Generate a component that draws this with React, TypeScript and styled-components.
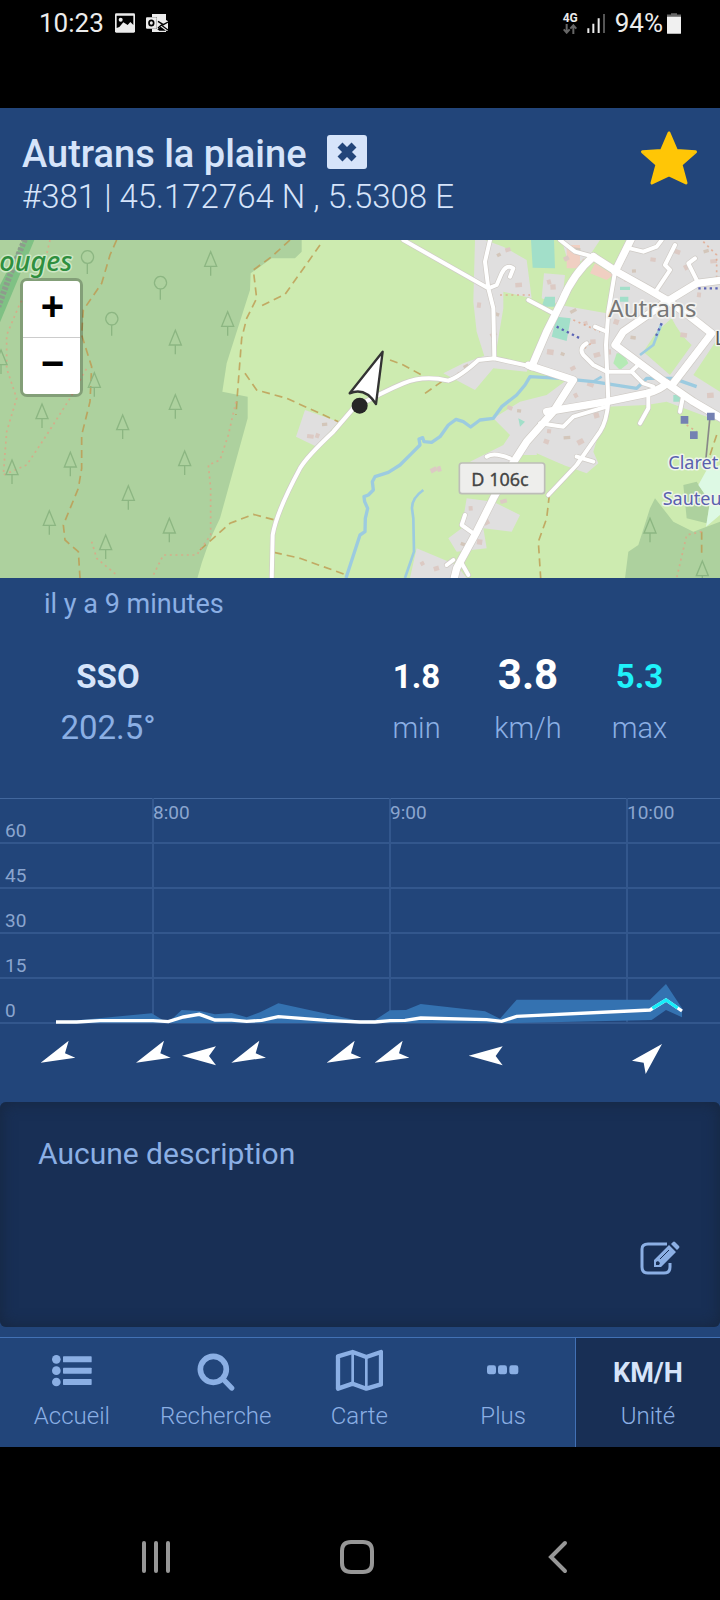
import React from "react";
import styled, { createGlobalStyle } from "styled-components";

const color = {
  bg: "#22457a",
  panel: "#182f55",
  line: "#4271b5",
  bright: "#d6e4fa",
  soft: "#8bafe4",
};

const GlobalStyle = createGlobalStyle`
  * { box-sizing: border-box; }
  body { margin: 0; background: #000; font-family: Roboto, "Liberation Sans", sans-serif; }
  button { font-family: inherit; padding: 0; border: 0; background: none; cursor: pointer; color: inherit; }
  h1, p, dl, dt, dd { margin: 0; }
  svg { display: block; }
`;

const Screen = styled.div`
  display: flex;
  flex-direction: column;
  min-height: 100vh;
  background: #000;
`;

const StatusBar = styled.div`
  display: flex;
  justify-content: space-between;
  height: 108px;
  padding: 8px 39px 0 39px;
  color: #ececec;
  font-size: 26px;
  line-height: 30px;
`;

const StatusGroup = styled.div<{ $gap: number }>`
  display: flex;
  align-items: center;
  height: 30px;
  gap: ${(p) => p.$gap}px;
`;

const Network = styled.div`
  display: flex;
  flex-direction: column;
  align-items: center;
  font-size: 12px;
  font-weight: 700;
  line-height: 12px;
`;

const Header = styled.header`
  display: flex;
  justify-content: space-between;
  align-items: flex-start;
  height: 132px;
  padding: 22px 22px 0;
  background: ${color.bg};
  color: ${color.bright};
`;

const TitleRow = styled.div`
  display: flex;
  align-items: flex-start;
  gap: 20px;
  height: 45px;
`;

const Title = styled.h1`
  font-size: 38px;
  font-weight: 500;
  line-height: 48px;
`;

const CloseButton = styled.button`
  display: grid;
  place-items: center;
  width: 40px;
  height: 34px;
  margin-top: 5px;
  border-radius: 3px;
  background: ${color.bright};
`;

const Coordinates = styled.p`
  font-size: 33px;
  font-weight: 300;
  line-height: 44px;
`;

const MapArea = styled.section`
  position: relative;
  height: 338px;
  overflow: hidden;
  background: #cdebb0;
`;

const MapDrawing = styled.svg`
  width: 100%;
  height: 100%;
`;

const ZoomControl = styled.div`
  position: absolute;
  left: 20px;
  top: 38px;
  display: flex;
  flex-direction: column;
  border: 3px solid rgba(0, 0, 0, 0.24);
  border-radius: 7px;
  background-clip: padding-box;
`;

const ZoomButton = styled.button<{ $last?: boolean }>`
  width: 57px;
  height: ${(p) => (p.$last ? 56 : 57)}px;
  padding: 0 0 6px 2px;
  border-bottom: ${(p) => (p.$last ? "0" : "1px solid #ccc")};
  border-radius: ${(p) => (p.$last ? "0 0 4px 4px" : "4px 4px 0 0")};
  background: #fff;
  color: #000;
  font: 700 40px/50px "Liberation Sans", sans-serif;
`;

const Readings = styled.section`
  height: 220px;
  padding: 10px 25px 0 44px;
  background: ${color.bg};
  color: ${color.soft};
`;

const Age = styled.p`
  font-size: 27px;
  line-height: 32px;
`;

const ReadingRow = styled.div`
  display: flex;
  justify-content: space-between;
  margin-top: 27px;
  text-align: center;
`;

const Direction = styled.dl`
  display: flex;
  flex-direction: column;
  width: 128px;
`;

const Speeds = styled.div`
  display: flex;
`;

const Speed = styled.dl<{ $width: number }>`
  display: flex;
  flex-direction: column;
  width: ${(p) => p.$width}px;
`;

const Value = styled.dd<{ $tone: string; $large?: boolean }>`
  color: ${(p) => p.$tone};
  font-size: ${(p) => (p.$large ? 42 : 33)}px;
  font-weight: 700;
  line-height: ${(p) => (p.$large ? 56 : 60)}px;
  height: 57px;
`;

const Caption = styled.dt<{ $size: number; $weight: number }>`
  order: 1;
  font-size: ${(p) => p.$size}px;
  font-weight: ${(p) => p.$weight};
  line-height: 48px;
`;

const ChartArea = styled.section`
  min-height: 304px;
  background: ${color.bg};
`;

const ChartDrawing = styled.svg`
  width: 100%;
  height: auto;
`;

const DescriptionWrap = styled.section`
  padding-bottom: 10px;
  background: ${color.bg};
`;

const Description = styled.div`
  display: flex;
  flex-direction: column;
  justify-content: space-between;
  height: 225px;
  padding: 32px 40px 52px 38px;
  border-radius: 6px;
  background: ${color.panel};
  box-shadow: inset 0 0 16px rgba(22, 34, 52, 0.7);
  color: ${color.soft};
  font-size: 30px;
  line-height: 40px;
`;

const EditButton = styled.button`
  align-self: flex-end;
  display: block;
`;

const TabBar = styled.nav`
  display: grid;
  grid-template-columns: repeat(4, 1fr) 145px;
  height: 110px;
  border-top: 1px solid ${color.line};
  background: ${color.bg};
`;

const Tab = styled.button<{ $active?: boolean }>`
  display: flex;
  flex-direction: column;
  align-items: center;
  padding-top: 11px;
  border-left: ${(p) => (p.$active ? `1px solid ${color.line}` : "0")};
  background: ${(p) => (p.$active ? color.panel : "transparent")};
  color: ${color.soft};
  font-size: 24px;
  font-weight: 300;
  line-height: 30px;
`;

const TabGraphic = styled.span`
  display: flex;
  align-items: flex-start;
  height: 52px;
`;

const Unit = styled.strong`
  color: ${color.bright};
  font-size: 27px;
  font-weight: 700;
  line-height: 48px;
`;

const SystemBar = styled.div`
  display: flex;
  flex: 1;
  justify-content: space-around;
  padding: 88px 62px 0 55px;
`;

const SystemButton = styled.button`
  align-self: flex-start;
  width: 44px;
  height: 44px;
`;

/* ---- status icons ---- */

const PictureIcon = () => (
  <svg width="20" height="20" viewBox="0 0 60 58">
    <rect width="60" height="58" rx="4" fill="#ececec" />
    <path d="M5 7H55V35L46 26 38 35 25 27 13 41 5 44Z" fill="#000" />
    <circle cx="17" cy="19" r="6" fill="#ececec" />
  </svg>
);

const MailIcon = () => (
  <svg width="22" height="18" viewBox="0 0 66 54">
    <path d="M18 0H60V18L66 22V50H60L44 38 34 46 40 50H60V54H18V44H32V10H18Z" fill="#ececec" />
    <path d="M36 22 52 32 66 24M36 42 46 33 66 48" fill="none" stroke="#000" strokeWidth="4" />
    <rect y="10" width="32" height="34" rx="3" fill="#ececec" />
    <ellipse cx="16" cy="27" rx="7" ry="8" fill="none" stroke="#000" strokeWidth="5" />
  </svg>
);

const DataArrows = () => (
  <svg width="14" height="10" viewBox="0 0 42 30" fill="none" stroke="#666" strokeWidth="6">
    <path d="M11 0V25M2 16 11 26 20 16M31 30V5M22 14 31 4 40 14" />
  </svg>
);

const SignalIcon = () => (
  <svg width="19" height="20" viewBox="0 0 57 60">
    <path d="M4 60V46M19 60V32M35 60V16" stroke="#ececec" strokeWidth="6" />
    <path d="M51 60V3" stroke="#555" strokeWidth="6" />
  </svg>
);

const BatteryIcon = () => (
  <svg width="14" height="21" viewBox="0 0 42 62">
    <path d="M12 0H30V4H42V14H0V4H12Z" fill="#666" />
    <path d="M0 11H42V60Q42 62 40 62H2Q0 62 0 60Z" fill="#f0f0f0" />
  </svg>
);

/* ---- header icons ---- */

const CrossIcon = () => (
  <svg width="22" height="22" viewBox="0 0 22 22">
    <path d="M4 4 18 18M18 4 4 18" stroke={color.bg} strokeWidth="7" />
  </svg>
);

const StarIcon = () => (
  <svg width="58" height="56" viewBox="0 0 58 56">
    <path
      d="M29 3 36.5 20.5 55.5 21.8 41 34.5 46 53 29 45 12 53 17 34.5 2.5 21.8 21.5 20.5Z"
      fill="#ffc606"
      stroke="#ffc606"
      strokeWidth="3"
      strokeLinejoin="round"
    />
  </svg>
);

/* ---- map ---- */

const conifers = [
  [632, 50], [683, 230], [526, 286], [526, 479], [368, 540], [126, 507], [211, 652], [554, 648],
  [385, 752], [148, 827], [508, 850], [317, 900], [36, 675], [283, 413], [3, 345], [1950, 850], [2107, 978],
];
const broadleaves = [[262, 47], [335, 232], [481, 124]];

const mainRoads = [
  "M1902-5 1845 110",
  "M1780 65 1850 110 1940 160 2000 195 2065 240 2135 295 2020 445",
  "M1780 65Q1720 115 1685 200L1640 290 1595 395",
  "M1585 391 1720 435 1660 530 1580 620 1535 690 1480 790 1430 890 1370 1000 1360 1040",
  "M1640 530 1820 500 1940 475Q1980 465 2000 445",
  "M2000 445 1845 330 1870 290 2000 200 2090 145 2170 135",
  "M2000 445 2080 500 2170 553",
];
const minorRoads = [
  "M1845 110 1825 230 1818 330 1825 500Q1820 560 1800 590L1730 690 1645 780",
  "M1680 15 1725 50 1780 65",
  "M1210 15 1465 160 1480 220 1483 370M1470 15 1455 80 1465 160 1490 150 1505 115Q1520 85 1540 100L1530 125",
  "M815 1035 818 900Q830 830 900 700 920 665 1000 590L1060 520Q1150 470 1210 445T1345 437Q1380 425 1435 375L1483 370 1595 395",
  "M1585 195 1660 235",
  "M1760 325Q1735 340 1750 360L1780 390 1820 410H1895L1930 445 1960 455M1785 275 1820 290M1895 408 1920 385",
  "M1820 515 1720 545 1690 575 1620 565",
  "M1945 480V520L1920 565M2050 480 2040 530",
  "M1890 40 1930 50 1970 35 1985 15M2025 30 1995 90 2010 105 1970 165M2085 70 2065 85 2095 145",
  "M1420 895 1385 870 1395 840M1340 990 1360 975M1385 985 1405 1020",
  "M1730 665 1780 680M1460 665Q1480 650 1530 670",
];
const residential = [
  "M1425 15H1455L1510 35 1580 75 1595 190 1510 170V220L1485 370H1455L1430 290 1420 200Z",
  "M1330 415 1390 385 1460 360 1590 390 1580 410 1480 400 1425 465Z",
  "M1685 15H1800L1770 60 1710 100Z",
  "M1880 15H2160V300L2080 420 2160 470V560L2000 500 1940 510 1820 515 1780 650 1795 685 1760 715 1690 690 1610 660H1550L1510 700 1410 680 1510 630 1530 600 1480 550 1560 500 1640 480 1700 435 1600 390 1680 210 1820 235 1845 100Z",
  "M1632 115 1695 120 1685 210 1625 190Z",
  "M1400 790 1480 800 1560 840 1535 890 1450 880 1460 940 1370 950 1345 910 1385 880Z",
  "M1250 940 1370 990 1400 1029H1230Z",
  "M915 525 1015 560 950 635 888 605Z",
];
const buildings = [
  [1500, 60], [1525, 45], [1555, 150], [1440, 210], [1490, 240], [1480, 300], [1650, 140], [1660, 155],
  [1730, 45], [1755, 80], [1700, 70], [1880, 130], [1905, 110], [1960, 75], [2030, 50], [2060, 95],
  [2120, 50], [2140, 80], [2100, 180], [1850, 260], [1720, 230], [1760, 265], [1780, 320], [1650, 350],
  [1690, 360], [1720, 400], [1790, 360], [1830, 350], [1900, 310], [1770, 450], [1730, 480], [1790, 540],
  [1700, 610], [1650, 590], [1640, 620], [1740, 620], [1700, 470], [2060, 220], [2050, 300], [1380, 420],
  [1400, 395], [1510, 800], [1415, 820], [1440, 920], [1390, 930], [1270, 985], [1310, 1000], [2130, 480],
  [1560, 530], [1530, 520], [1300, 705], [1320, 700], [975, 570], [930, 605], [955, 603], [1460, 860],
];
const trails = [
  "M350 15 330 60 305 145 250 225 245 300 275 395 270 500 245 600V700L235 760 190 870 195 915 235 950 240 1029",
  "M870 15 815 65 760 105 770 190 740 250 725 310 712 480 708 540",
  "M960 30 900 115 855 178 780 215",
  "M735 415 770 465 860 490 1015 560",
  "M600 945 690 865 760 838 825 855",
  "M822 952 900 970 1040 1020",
  "M1170 375 1210 390 1265 420M1275 475 1325 440",
  "M1648 780 1640 850 1615 920 1622 1029",
  "M2150 600 2130 660M2105 890V960",
];
const footpaths = [
  "M150 15 130 100 60 205 20 300 20 400 50 490 20 590 10 720 80 690 140 600 210 490 260 400",
  "M708 500 685 600 660 675 625 690 632 760V900L590 960 490 960 460 1020",
  "M275 920 290 970 350 1020",
  "M1720 255 1800 290M1500 180 1590 180M1740 350 1780 320M2110 20 2150 60V130",
  "M2105 890 2060 900 2030 1029M2060 570 2090 590",
];

const MarkerIcon = () => (
  <g>
    <path
      d="M1148 350 1049 475Q1095 455 1128 507Z"
      fill="#fff"
      stroke="#333"
      strokeWidth="7"
      strokeLinejoin="round"
    />
    <circle cx="1079" cy="512" r="24" fill="#262626" />
  </g>
);

const TerrainMap = () => (
  <MapDrawing viewBox="0 15 2160 1014" preserveAspectRatio="xMidYMid slice" role="img" aria-label="Carte">
    <rect y="0" width="2160" height="1040" fill="#cdebb0" />
    <path d="M0 15H905V50L885 70H815L752 115 750 165 680 385 667 470 743 485V550L660 850Q615 940 592 1030H0Z" fill="#add19e" />
    <path d="M0 150 70 15H103L0 262Z" fill="#7fc184" />
    <path d="M80 0 30 120-5 215" stroke="#8d9c8c" strokeWidth="18" strokeDasharray="9 5" fill="none" />
    {residential.map((d) => <path key={d} d={d} fill="#e0dfdf" />)}
    <path d="M1970 290 2015 250Q2040 300 2075 330L2010 420 1930 350ZM1755 90 1825 140 1815 225 1705 190ZM1690 690 1610 655 1615 700 1640 760 1690 710Z" fill="#cdebb0" />
    <path d="M1593 15H1662L1665 100 1598 98ZM1670 245 1712 250 1700 318 1655 305ZM1635 185H1665V215H1625ZM1860 155H1890V165H1860ZM1860 185H1885V200H1860ZM1555 550 1575 560 1560 575ZM2020 480H2045V500H2020Z" fill="#a2dfc9" />
    <path d="M1700 30H1740V100H1700ZM1785 85 1840 120 1820 135 1770 115Z" fill="#f0cfc2" />
    <path d="M1850 355H1870L1885 385 1860 405 1840 385Z" fill="#b5eab5" />
    <path d="M1965 790 2020 860 2080 890 2160 860V1030H1875L1885 950 1915 930 1950 820ZM2050 750 2090 740 2130 800 2120 865 2060 850Z" fill="#add19e" />
    <path d="M2160 690 2120 705 2095 750 2130 800 2118 875 2160 840Z" fill="#ddf9e4" />
    {buildings.map(([x, y], i) => (
      <rect key={i} x={x - 9} y={y - 7} width={12 + (i % 3) * 4} height={10 + (i % 4) * 2} transform={`rotate(${(i % 5) * 12 - 28} ${x} ${y})`} fill={i % 4 ? "#dccac4" : "#d3c6ba"} />
    ))}
    <g fill="none" stroke="#9ccbe0" strokeLinejoin="round">
      <path strokeWidth="10" d="M1038 1029 1080 900 1095 890 1096 850 1103 820 1094 800 1092 785 1105 780 1120 765 1117 740 1125 725 1165 712 1200 690 1235 655 1260 630 1257 612 1268 608 1272 620 1295 622 1320 605 1345 570 1368 553 1390 560 1412 576 1440 555 1480 550 1505 515 1550 480 1575 450 1590 425 1680 430 1780 440 1910 460 1940 430 2020 430 2090 455" />
      <path strokeWidth="8" d="M1270 765Q1235 790 1236 820L1240 850 1242 950 1215 1029M1780 440 1805 425M1920 360 1960 330 1985 265" />
    </g>
    <g fill="none" stroke="#bf9a50" strokeWidth="5" strokeDasharray="24 15" opacity=".8">
      {trails.map((d) => <path key={d} d={d} />)}
    </g>
    <g fill="none" stroke="#e2a184" strokeWidth="5" strokeDasharray="6 11" opacity=".75">
      {footpaths.map((d) => <path key={d} d={d} />)}
    </g>
    <g fill="none" stroke="#cfcbc6" strokeLinejoin="round" strokeLinecap="round">
      {minorRoads.map((d) => <path key={d} d={d} strokeWidth="16" />)}
      {mainRoads.map((d) => <path key={d} d={d} strokeWidth="26" />)}
    </g>
    <g fill="none" stroke="#fff" strokeLinejoin="round" strokeLinecap="round">
      {minorRoads.map((d) => <path key={d} d={d} strokeWidth="12" />)}
      {mainRoads.map((d) => <path key={d} d={d} strokeWidth="22" />)}
    </g>
    <path d="M1670 275 1740 310M1985 265 1965 310M2095 160H2160" fill="none" stroke="#5b63b5" strokeWidth="7" strokeDasharray="7 10" />
    <g fill="none" stroke="#8cb682" strokeWidth="4">
      {conifers.map(([x, y]) => <path key={`${x}-${y}`} d={`M${x} ${y}L${x + 18} ${y + 44}H${x - 18}ZM${x} ${y + 44}V${y + 72}`} />)}
      {broadleaves.map(([x, y]) => <path key={`${x}-${y}`} d={`M${x} ${y + 38}a18 19 0 1 1 1 0ZM${x} ${y + 38}V${y + 70}`} />)}
    </g>
    <path d="M2130 545 2115 700" stroke="#888" strokeWidth="5" />
    <path d="M2042 543h23v23h-23ZM2121 533h23v23h-23ZM2070 589h23v23h-23Z" fill="#7480b2" />
    <rect x="1378" y="684" width="256" height="92" rx="8" fill="#eeeeec" stroke="#bdbdb8" strokeWidth="5" />
    <g fontFamily='"Noto Sans", sans-serif' strokeLinejoin="round" paintOrder="stroke">
      <text x="-2" y="107" fontSize="81" fontStyle="italic" fontWeight="500" fill="#2f8f3f" stroke="#cfe8c6" strokeWidth="9">ouges</text>
      <text x="1825" y="247" fontSize="72" fill="#777" stroke="#f3f3f1" strokeWidth="10">Autrans</text>
      <text x="2144" y="330" fontSize="60" fill="#555" stroke="#f3f3f1" strokeWidth="8">L</text>
      <text x="1414" y="752" fontSize="54" fill="#444" stroke="#444" strokeWidth="1">D 106c</text>
      <text x="2005" y="702" fontSize="54" fill="#5a60ae" stroke="#eef6ea" strokeWidth="9">Claret</text>
      <text x="1988" y="811" fontSize="54" fill="#5a60ae" stroke="#eef6ea" strokeWidth="9">Sauteu</text>
    </g>
    <MarkerIcon />
  </MapDrawing>
);

/* ---- chart ---- */

const hours = [
  { x: 153, label: "8:00" },
  { x: 390, label: "9:00" },
  { x: 627, label: "10:00" },
];
const levels = [60, 45, 30, 15, 0];
const westSouthWest = [122, 408, 694, 980, 1124];
const west = [546, 1406];

const WindChart = () => (
  <ChartDrawing viewBox="0 0 720 304" role="img" aria-label="Historique du vent">
    <g stroke="#33578d" strokeWidth="2">
      <path d="M0 .5H720" strokeWidth="1" stroke="#42679d" />
      {levels.map((v, i) => <path key={v} d={`M0 ${45 + i * 45}H720`} />)}
      {hours.map((h) => <path key={h.label} d={`M${h.x} 0V225`} />)}
    </g>
    <g fill="#8ba5cf" fontFamily="Roboto, sans-serif" fontSize="19">
      {hours.map((h) => <text key={h.label} x={h.x} y="21">{h.label}</text>)}
      {levels.map((v, i) => <text key={v} x="5" y={39 + i * 45}>{v}</text>)}
    </g>
    <g transform="translate(0 -18) scale(.3333333)">
      <path
        d="M168 727 240 720 455 700 495 724 515 718 545 690 600 693 645 703 695 699 740 712 780 697 835 670 1075 722 1125 720 1170 691 1218 690 1262 672 1455 694 1500 716 1550 659H1950L1998 612 2046 685V712L1998 690 1955 720 1550 729H168Z"
        fill="#3472b1"
      />
      <path
        d="M168 726H230L300 722H459L505 725 550 711 598 703 645 720H695L740 724 785 721 835 710 980 721 1080 726H1125L1170 722 1215 721 1262 714 1460 719 1505 724 1550 709 1950 690 1998 660 2046 693"
        fill="none"
        stroke="#fff"
        strokeWidth="10"
      />
      <path d="M1957 685 1998 660 2033 684" fill="none" stroke="#16eefa" strokeWidth="10" />
      <g fill="#fff">
        {westSouthWest.map((x) => <path key={x} d={`M${x} 848l84-66-11 38 31 13Z`} />)}
        {west.map((x) => <path key={x} d={`M${x} 827l102-28-21 29 21 28Z`} />)}
        <path d="M1986 792 1896 842 1931 848 1937 882Z" />
      </g>
    </g>
  </ChartDrawing>
);

/* ---- description and tab icons ---- */

const EditIcon = () => (
  <svg width="40" height="34" viewBox="0 0 40 34">
    <path d="M27 3H8Q2 3 2 8V26Q2 32 8 32H24Q30 32 30 26V22" fill="none" stroke={color.soft} strokeWidth="3" />
    <path d="M14 26V19L29 4 36 11 21 26ZM31 3 33 1Q34 0 35 1L39 5Q40 6 39 7L37 9Z" fill={color.soft} />
    <path d="M20 18 29 9" fill="none" stroke={color.panel} strokeWidth="1" />
    <path d="M16 21 18 20 20 22 19 24 16 24Z" fill={color.panel} />
  </svg>
);

const TabIcon = ({ children }: { children: React.ReactNode }) => (
  <svg width="48" height="42" viewBox="0 0 144 126" fill="currentColor">{children}</svg>
);

const ListIcon = () => (
  <TabIcon>
    {[31, 65, 99].map((y) => (
      <g key={y}>
        <circle cx="25" cy={y} r="13" />
        <rect x="45" y={y - 9} width="86" height="18" rx="2" />
      </g>
    ))}
  </TabIcon>
);

const SearchIcon = () => (
  <TabIcon>
    <g fill="none" stroke="currentColor" strokeLinecap="round">
      <circle cx="64" cy="61" r="39" strokeWidth="17" />
      <path d="M93 90 119 117" strokeWidth="16" />
    </g>
  </TabIcon>
);

const MapIcon = () => (
  <TabIcon>
    <g fill="none" stroke="currentColor" strokeLinejoin="round">
      <path d="M9 22 53 9 94 24 138 9V106L94 119 53 104 9 119Z" strokeWidth="13" />
      <path d="M53 9V104M94 24V119" strokeWidth="8" />
    </g>
  </TabIcon>
);

const DotsIcon = () => (
  <TabIcon>
    {[24, 57, 91].map((x) => <rect key={x} x={x} y="49" width="27" height="27" rx="7" />)}
  </TabIcon>
);

const tabs = [
  { label: "Accueil", Icon: ListIcon },
  { label: "Recherche", Icon: SearchIcon },
  { label: "Carte", Icon: MapIcon },
  { label: "Plus", Icon: DotsIcon },
];

const systemKeys = [
  { label: "Applications récentes", path: "M10 8V36M22 8V36M34 8V36" },
  { label: "Écran d’accueil", path: "M16 7H28Q37 7 37 16V28Q37 37 28 37H16Q7 37 7 28V16Q7 7 16 7Z" },
  { label: "Retour", path: "M29 8 15 22 29 36" },
];

export default function App() {
  return (
    <Screen>
      <GlobalStyle />
      <StatusBar>
        <StatusGroup $gap={11}>
          <span>10:23</span>
          <PictureIcon />
          <MailIcon />
        </StatusGroup>
        <StatusGroup $gap={9}>
          <Network>4G<DataArrows /></Network>
          <SignalIcon />
          <StatusGroup $gap={4}><span>94%</span><BatteryIcon /></StatusGroup>
        </StatusGroup>
      </StatusBar>

      <Header>
        <div>
          <TitleRow>
            <Title>Autrans la plaine</Title>
            <CloseButton aria-label="Fermer"><CrossIcon /></CloseButton>
          </TitleRow>
          <Coordinates>#381 | 45.172764 N , 5.5308 E</Coordinates>
        </div>
        <button aria-label="Favori"><StarIcon /></button>
      </Header>

      <MapArea>
        <TerrainMap />
        <ZoomControl>
          <ZoomButton aria-label="Zoom avant">+</ZoomButton>
          <ZoomButton $last aria-label="Zoom arrière">−</ZoomButton>
        </ZoomControl>
      </MapArea>

      <Readings>
        <Age>il y a 9 minutes</Age>
        <ReadingRow>
          <Direction>
            <Caption $size={33} $weight={400}>202.5°</Caption>
            <Value $tone={color.bright}>SSO</Value>
          </Direction>
          <Speeds>
            <Speed $width={111}>
              <Caption $size={29} $weight={300}>min</Caption>
              <Value $tone="#fff">1.8</Value>
            </Speed>
            <Speed $width={112}>
              <Caption $size={29} $weight={300}>km/h</Caption>
              <Value $tone="#fff" $large>3.8</Value>
            </Speed>
            <Speed $width={111}>
              <Caption $size={29} $weight={300}>max</Caption>
              <Value $tone="#1ff2fb">5.3</Value>
            </Speed>
          </Speeds>
        </ReadingRow>
      </Readings>

      <ChartArea><WindChart /></ChartArea>

      <DescriptionWrap>
        <Description>
          <p>Aucune description</p>
          <EditButton aria-label="Modifier la description"><EditIcon /></EditButton>
        </Description>
      </DescriptionWrap>

      <TabBar>
        {tabs.map(({ label, Icon }) => (
          <Tab key={label}>
            <TabGraphic><Icon /></TabGraphic>
            {label}
          </Tab>
        ))}
        <Tab $active>
          <TabGraphic><Unit>KM/H</Unit></TabGraphic>
          Unité
        </Tab>
      </TabBar>

      <SystemBar>
        {systemKeys.map(({ label, path }) => (
          <SystemButton key={label} aria-label={label}>
            <svg width="44" height="44" viewBox="0 0 44 44" fill="none" stroke="#979797" strokeWidth="4" strokeLinecap="round">
              <path d={path} />
            </svg>
          </SystemButton>
        ))}
      </SystemBar>
    </Screen>
  );
}
